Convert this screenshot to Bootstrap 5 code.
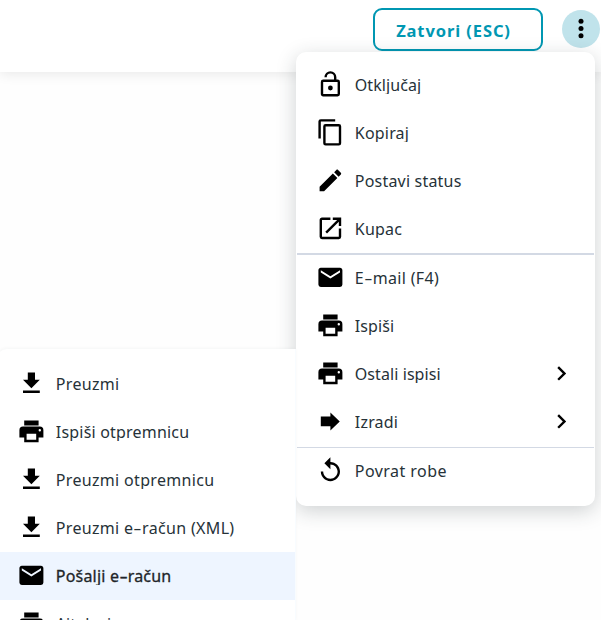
<!DOCTYPE html>
<html lang="hr">
<head>
<meta charset="utf-8">
<meta name="viewport" content="width=device-width, initial-scale=1">
<title>Račun</title>
<link href="https://cdn.jsdelivr.net/npm/bootstrap@5.3.0/dist/css/bootstrap.min.css" rel="stylesheet">
<style>
html, body { height: 620px; overflow: hidden; }
body { font-family: "Noto Sans", sans-serif; font-size: 16px; color: #263238; background: #fefefe; position: relative; }
.topbar { height: 72px; background: #fff; box-shadow: 0 2px 12px rgba(0,0,0,.09); padding: 8px 1px 0 0; gap: 19px; }
.btn-close-doc { width: 170px; height: 43px; border: 2px solid #0097b2; border-radius: 9px; color: #0097b2; background: #fff; font-weight: 700; font-size: 16.5px; letter-spacing: .9px; padding: 0 9px 0 0; line-height: 41px; }
.btn-more { width: 38px; height: 38px; background: #c0e3eb; margin-top: 2px; }
.flyout { background: #fff; position: absolute; }
.main-flyout { left: 296px; top: 52px; width: 299px; height: 453.5px; padding-top: 9px; border-radius: 10px; box-shadow: 0 5px 20px rgba(38,50,56,.22); }
.sub-flyout { left: -3px; top: 349px; width: 298px; height: 271px; padding-top: 11px; border-radius: 10px 0 0 0; box-shadow: 0 0 4px rgba(38,50,56,.06); overflow: hidden; }
.edge-line { position: absolute; left: 295px; top: 349px; bottom: 0; width: 1px; background: #f8fcff; }
.entry { height: 48px; padding: 0 19px 2px 20.3px; letter-spacing: .2px; }
.entry svg { width: 28.8px; height: 28.8px; flex: none; fill: #000; }
.entry .txt { margin: 1px 0 0 9.7px; line-height: 20px; height: 19px; overflow: hidden; white-space: nowrap; flex: 1; }
.entry.chosen { background: #eef5ff; color: #212529; }
.entry.chosen .txt { -webkit-text-stroke: .3px #212529; }
.dash { display: inline-block; transform: scaleX(1.6); margin: 0 1.6px; }
.ls-tight { letter-spacing: .08px; }
.ls-mid { letter-spacing: .33px; }
.ls-wide { letter-spacing: .45px; }
.rule-a { height: 2px; margin: 0 1px -1px; background: #d3d9e4; }
.rule-b { height: 1px; margin: 1px 1px -1px; background: #d3d9e4; }
</style>
<script src="https://cdn.jsdelivr.net/npm/bootstrap@5.3.0/dist/js/bootstrap.bundle.min.js"></script>
</head>
<body>
<svg class="d-none">
<symbol id="lock" viewBox="0 0 24 24"><path d="M18,20V10H6V20H18M18,8A2,2 0 0,1 20,10V20A2,2 0 0,1 18,22H6C4.89,22 4,21.1 4,20V10A2,2 0 0,1 6,8H15V6A3,3 0 0,0 9,6H7A5,5 0 0,1 17,6V8H18M12,17A2,2 0 0,1 12,13A2,2 0 0,1 12,17Z"/></symbol>
<symbol id="copy" viewBox="0 0 24 24"><path d="M19,21H8V7H19M19,5H8A2,2 0 0,0 6,7V21A2,2 0 0,0 8,23H19A2,2 0 0,0 21,21V7A2,2 0 0,0 19,5M16,1H4A2,2 0 0,0 2,3V17H4V3H16V1Z"/></symbol>
<symbol id="pencil" viewBox="0 0 24 24"><path d="M20.71,7.04C21.1,6.65 21.1,6 20.71,5.63L18.37,3.29C18,2.9 17.35,2.9 16.96,3.29L15.12,5.12L18.87,8.87M3,17.25V21H6.75L17.81,9.93L14.06,6.18L3,17.25Z"/></symbol>
<symbol id="open" viewBox="0 0 24 24"><path d="M14,3V5H17.59L7.76,14.83L9.17,16.24L19,6.41V10H21V3M19,19H5V5H12V3H5C3.89,3 3,3.9 3,5V19A2,2 0 0,0 5,21H19A2,2 0 0,0 21,19V12H19V19Z"/></symbol>
<symbol id="mail" viewBox="0 0 24 24"><path d="M20,8L12,13L4,8V6L12,11L20,6M20,4H4C2.89,4 2,4.89 2,6V18A2,2 0 0,0 4,20H20A2,2 0 0,0 22,18V6C22,4.89 21.1,4 20,4Z"/></symbol>
<symbol id="printer" viewBox="0 0 24 24"><path d="M18,3H6V7H18M19,12A1,1 0 0,1 19,10A1,1 0 0,1 19,12M16,19H8V14H16M19,8H5A3,3 0 0,0 2,11V17H6V21H18V17H22V11A3,3 0 0,0 19,8Z"/></symbol>
<symbol id="arrow" viewBox="0 0 24 24"><path d="M4,8H12V4.5L19.8,12L12,19.5V16H4Z"/></symbol>
<symbol id="replay" viewBox="0 0 24 24"><path d="M12 5V1L7 6l5 5V7c3.31 0 6 2.69 6 6s-2.69 6-6 6-6-2.69-6-6H4c0 4.42 3.58 8 8 8s8-3.58 8-8-3.58-8-8-8z"/></symbol>
<symbol id="download" viewBox="0 0 24 24"><path d="M5,20H19V18H5M19,9H15V3H9V9H5L12,16L19,9Z"/></symbol>
<symbol id="chevron" viewBox="0 0 24 24"><path d="M8.59,16.58L13.17,12L8.59,7.41L10,6L16,12L10,18L8.59,16.58Z"/></symbol>
</svg>
<header class="topbar d-flex justify-content-end align-items-start">
  <button class="btn btn-close-doc">Zatvori (ESC)</button>
  <button class="btn btn-more rounded-circle p-0 border-0 d-flex align-items-center justify-content-center"><svg width="8" height="22" viewBox="0 0 8 22"><circle cx="4" cy="3.2" r="2.5"/><circle cx="4" cy="10.5" r="2.5"/><circle cx="4" cy="17.8" r="2.5"/></svg></button>
</header>
<div class="flyout main-flyout">
  <div class="entry d-flex align-items-center"><svg><use href="#lock"/></svg><span class="txt ls-tight">Otključaj</span></div>
  <div class="entry d-flex align-items-center"><svg><use href="#copy"/></svg><span class="txt">Kopiraj</span></div>
  <div class="entry d-flex align-items-center"><svg><use href="#pencil"/></svg><span class="txt">Postavi status</span></div>
  <div class="entry d-flex align-items-center"><svg><use href="#open"/></svg><span class="txt">Kupac</span></div>
  <div class="rule-a"></div>
  <div class="entry d-flex align-items-center"><svg><use href="#mail"/></svg><span class="txt ls-mid">E<span class="dash">-</span>mail (F4)</span></div>
  <div class="entry d-flex align-items-center"><svg><use href="#printer"/></svg><span class="txt ls-tight">Ispiši</span></div>
  <div class="entry d-flex align-items-center"><svg><use href="#printer"/></svg><span class="txt ls-tight">Ostali ispisi</span><svg><use href="#chevron"/></svg></div>
  <div class="entry d-flex align-items-center"><svg><use href="#arrow"/></svg><span class="txt">Izradi</span><svg><use href="#chevron"/></svg></div>
  <div class="rule-b"></div>
  <div class="entry d-flex align-items-center"><svg><use href="#replay"/></svg><span class="txt ls-wide">Povrat robe</span></div>
</div>
<div class="flyout sub-flyout">
  <div class="entry d-flex align-items-center"><svg><use href="#download"/></svg><span class="txt ls-mid">Preuzmi</span></div>
  <div class="entry d-flex align-items-center"><svg><use href="#printer"/></svg><span class="txt">Ispiši otpremnicu</span></div>
  <div class="entry d-flex align-items-center"><svg><use href="#download"/></svg><span class="txt ls-mid">Preuzmi otpremnicu</span></div>
  <div class="entry d-flex align-items-center"><svg><use href="#download"/></svg><span class="txt ls-mid">Preuzmi e<span class="dash">-</span>račun (XML)</span></div>
  <div class="entry chosen d-flex align-items-center"><svg><use href="#mail"/></svg><span class="txt">Pošalji e<span class="dash">-</span>račun</span></div>
  <div class="entry d-flex align-items-center"><svg><use href="#printer"/></svg><span class="txt ls-tight">Aitalovi</span></div>
</div>
<div class="edge-line"></div>
</body>
</html>
